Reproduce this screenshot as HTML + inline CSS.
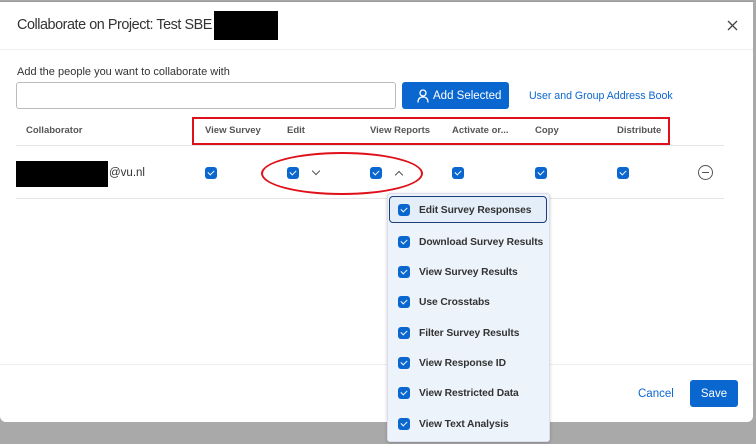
<!DOCTYPE html><html><head><style>
body{margin:0;width:756px;height:444px;background:#a9a9a9;font-family:"Liberation Sans",sans-serif;position:relative;overflow:hidden}
.m{position:absolute;left:0;top:1px;width:753px;height:420px;background:#fff;border-radius:0 0 6px 6px;border-top:1px solid #999}
.a{position:absolute;white-space:nowrap}
.cb{position:absolute;width:12px;height:12px;background:#0b67d0;border-radius:3px}
.cb:after{content:"";position:absolute;left:3px;top:2.5px;width:5px;height:3px;border-left:1.6px solid #fff;border-bottom:1.6px solid #fff;transform:rotate(-45deg)}
.h{position:absolute;top:123px;font-size:9.5px;font-weight:bold;color:#555;white-space:nowrap}
.hr{position:absolute;left:16px;width:708px;height:1px;background:#e6e6e6}
.it{position:absolute;left:0;width:160px;height:30px}
.it .cb{left:10px;top:10px}
.it span{position:absolute;left:31px;top:11px;font-size:10.3px;color:#333;font-weight:bold;white-space:nowrap;letter-spacing:-.1px}
</style></head><body>
<div class="m">
<div class="a" style="left:17px;top:15px;font-size:14.4px;color:#333;letter-spacing:-.45px">Collaborate on Project: Test SBE</div>
<div class="a" style="left:214px;top:9px;width:64px;height:29px;background:#000"></div>
<svg class="a" style="left:727px;top:18px" width="11" height="11" viewBox="0 0 11 11"><path d="M1 1L10 10M10 1L1 10" stroke="#444" stroke-width="1.3"/></svg>
<div class="a" style="left:0;top:47px;width:753px;height:1px;background:#eee"></div>
<div class="a" style="left:17px;top:64px;font-size:11px;color:#333">Add the people you want to collaborate with</div>
<div class="a" style="left:16px;top:80px;width:378px;height:25px;border:1px solid #bbb;border-radius:3px"></div>
<div class="a" style="left:402px;top:80px;width:107px;height:27px;background:#0b67d0;border-radius:3px;color:#fff;font-size:11.5px;line-height:28px">
<svg class="a" style="left:15px;top:7px" width="12" height="14" viewBox="0 0 12 14"><circle cx="6" cy="4" r="3" fill="none" stroke="#fff" stroke-width="1.3"/><path d="M1 13.5C1 9.5 3 8 6 8s5 1.5 5 5.5" fill="none" stroke="#fff" stroke-width="1.3"/></svg>
<span class="a" style="left:31px">Add Selected</span></div>
<div class="a" style="left:529px;top:88px;font-size:10.6px;color:#0b67d0">User and Group Address Book</div>
<div class="h" style="left:26px">Collaborator</div>
<div class="h" style="left:205px">View Survey</div>
<div class="h" style="left:287px">Edit</div>
<div class="h" style="left:370px">View Reports</div>
<div class="h" style="left:452px">Activate or...</div>
<div class="h" style="left:535px">Copy</div>
<div class="h" style="left:617px">Distribute</div>
<div class="a" style="left:192px;top:115px;width:474px;height:24px;border:2px solid #e0101a"></div>
<div class="hr" style="top:143px"></div>
<div class="a" style="left:16px;top:159px;width:92px;height:26px;background:#000"></div>
<div class="a" style="left:109px;top:165px;font-size:11.5px;color:#333">@vu.nl</div>
<div class="cb" style="left:205px;top:165px"></div>
<div class="cb" style="left:287px;top:165px"></div>
<div class="a" style="left:313px;top:166px;width:5px;height:5px;border-right:1.2px solid #555;border-bottom:1.2px solid #555;transform:rotate(45deg)"></div>
<div class="cb" style="left:370px;top:165px"></div>
<div class="a" style="left:396px;top:170px;width:5px;height:5px;border-left:1.2px solid #555;border-top:1.2px solid #555;transform:rotate(45deg)"></div>
<div class="cb" style="left:452px;top:165px"></div>
<div class="cb" style="left:535px;top:165px"></div>
<div class="cb" style="left:617px;top:165px"></div>
<div class="a" style="left:698px;top:163px;width:13px;height:13px;border:1.3px solid #555;border-radius:50%"></div>
<div class="a" style="left:702px;top:170px;width:7px;height:1.3px;background:#555"></div>
<div class="a" style="left:261px;top:150px;width:158px;height:39px;border:2px solid #e0101a;border-radius:50%"></div>
<div class="hr" style="top:196px"></div>
<div class="a" style="left:0;top:362px;width:753px;height:1px;background:#eee"></div>
<div class="a" style="left:638px;top:386px;font-size:11.5px;color:#0b67d0">Cancel</div>
<div class="a" style="left:690px;top:378px;width:48px;height:27px;background:#0b67d0;border-radius:3px;color:#fff;font-size:11.5px;line-height:29px;text-align:center">Save</div>
</div>
<div class="a" style="left:387px;top:193px;width:161px;height:247px;background:#edf3fb;border:1px solid #dde;border-radius:3px;box-shadow:0 1px 3px rgba(0,0,0,.2)">
<div class="it" style="top:2px;left:1px;width:158px;height:27px;border:1.5px solid #1b3f7a;border-radius:4px;box-sizing:border-box;background:#e4eef9"><div class="cb" style="left:8px;top:7px"></div><span style="left:29px;top:8px">Edit Survey Responses</span></div>
<div class="it" style="top:32px"><div class="cb"></div><span>Download Survey Results</span></div>
<div class="it" style="top:62px"><div class="cb"></div><span>View Survey Results</span></div>
<div class="it" style="top:92px"><div class="cb"></div><span>Use Crosstabs</span></div>
<div class="it" style="top:123px"><div class="cb"></div><span>Filter Survey Results</span></div>
<div class="it" style="top:153px"><div class="cb"></div><span>View Response ID</span></div>
<div class="it" style="top:183px"><div class="cb"></div><span>View Restricted Data</span></div>
<div class="it" style="top:214px"><div class="cb"></div><span>View Text Analysis</span></div>
</div>
</body></html>
